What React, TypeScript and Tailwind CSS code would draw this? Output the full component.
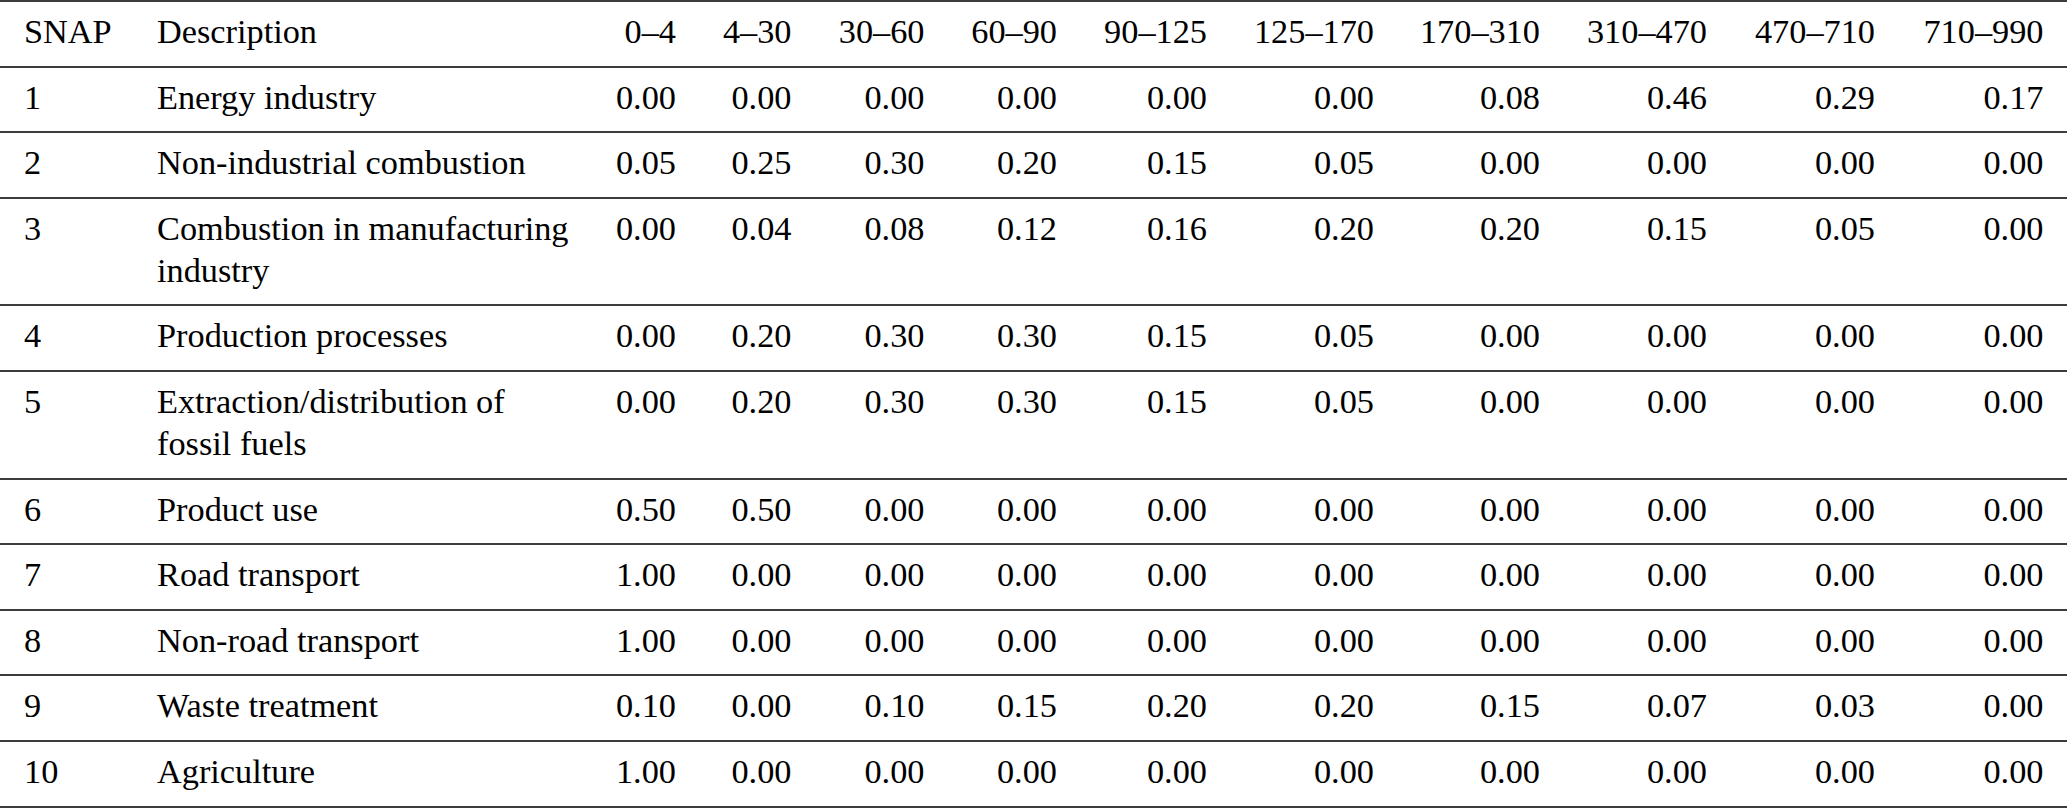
const columns = [
  "SNAP",
  "Description",
  "0–4",
  "4–30",
  "30–60",
  "60–90",
  "90–125",
  "125–170",
  "170–310",
  "310–470",
  "470–710",
  "710–990",
];

const colWidths = [
  "w-[133.5px]",
  "w-[460.5px]",
  "w-[105.5px]",
  "w-[115.5px]",
  "w-[133px]",
  "w-[132.5px]",
  "w-[150px]",
  "w-[167px]",
  "w-[166px]",
  "w-[167px]",
  "w-[168px]",
  "w-[168.5px]",
];

type Row = { snap: string; description: string; values: string[] };

const rows: Row[] = [
  { snap: "1", description: "Energy industry", values: ["0.00", "0.00", "0.00", "0.00", "0.00", "0.00", "0.08", "0.46", "0.29", "0.17"] },
  { snap: "2", description: "Non-industrial combustion", values: ["0.05", "0.25", "0.30", "0.20", "0.15", "0.05", "0.00", "0.00", "0.00", "0.00"] },
  { snap: "3", description: "Combustion in manufacturing industry", values: ["0.00", "0.04", "0.08", "0.12", "0.16", "0.20", "0.20", "0.15", "0.05", "0.00"] },
  { snap: "4", description: "Production processes", values: ["0.00", "0.20", "0.30", "0.30", "0.15", "0.05", "0.00", "0.00", "0.00", "0.00"] },
  { snap: "5", description: "Extraction/distribution of fossil fuels", values: ["0.00", "0.20", "0.30", "0.30", "0.15", "0.05", "0.00", "0.00", "0.00", "0.00"] },
  { snap: "6", description: "Product use", values: ["0.50", "0.50", "0.00", "0.00", "0.00", "0.00", "0.00", "0.00", "0.00", "0.00"] },
  { snap: "7", description: "Road transport", values: ["1.00", "0.00", "0.00", "0.00", "0.00", "0.00", "0.00", "0.00", "0.00", "0.00"] },
  { snap: "8", description: "Non-road transport", values: ["1.00", "0.00", "0.00", "0.00", "0.00", "0.00", "0.00", "0.00", "0.00", "0.00"] },
  { snap: "9", description: "Waste treatment", values: ["0.10", "0.00", "0.10", "0.15", "0.20", "0.20", "0.15", "0.07", "0.03", "0.00"] },
  { snap: "10", description: "Agriculture", values: ["1.00", "0.00", "0.00", "0.00", "0.00", "0.00", "0.00", "0.00", "0.00", "0.00"] },
];

const cell = "border-t-2 border-[#3c3c3c] pt-[8px] pb-[13.6px] align-top font-normal";

export default function App() {
  return (
    <div className="min-h-screen bg-white text-black" style={{ fontFamily: '"Liberation Serif", "Times New Roman", serif' }}>
      <table className="w-[2067px] table-fixed border-separate border-spacing-0 text-[34.3px] leading-[42px]">
        <colgroup>
          {colWidths.map((w, i) => (
            <col key={i} className={w} />
          ))}
        </colgroup>
        <thead>
          <tr>
            <th className={`${cell} pl-[24px] text-left`}>{columns[0]}</th>
            <th className={`${cell} pl-[23.5px] pr-[17px] text-left`}>{columns[1]}</th>
            {columns.slice(2).map((c) => (
              <th key={c} className={`${cell} pr-[23.5px] text-right`}>
                {c}
              </th>
            ))}
          </tr>
        </thead>
        <tbody>
          {rows.map((row, idx) => {
            const last = idx === rows.length - 1 ? " border-b-2" : "";
            return (
              <tr key={row.snap}>
                <td className={`${cell}${last} pl-[24px] text-left`}>{row.snap}</td>
                <td className={`${cell}${last} pl-[23.5px] pr-[17px] text-left`}>{row.description}</td>
                {row.values.map((v, i) => (
                  <td key={i} className={`${cell}${last} pr-[23.5px] text-right`}>
                    {v}
                  </td>
                ))}
              </tr>
            );
          })}
        </tbody>
      </table>
    </div>
  );
}
